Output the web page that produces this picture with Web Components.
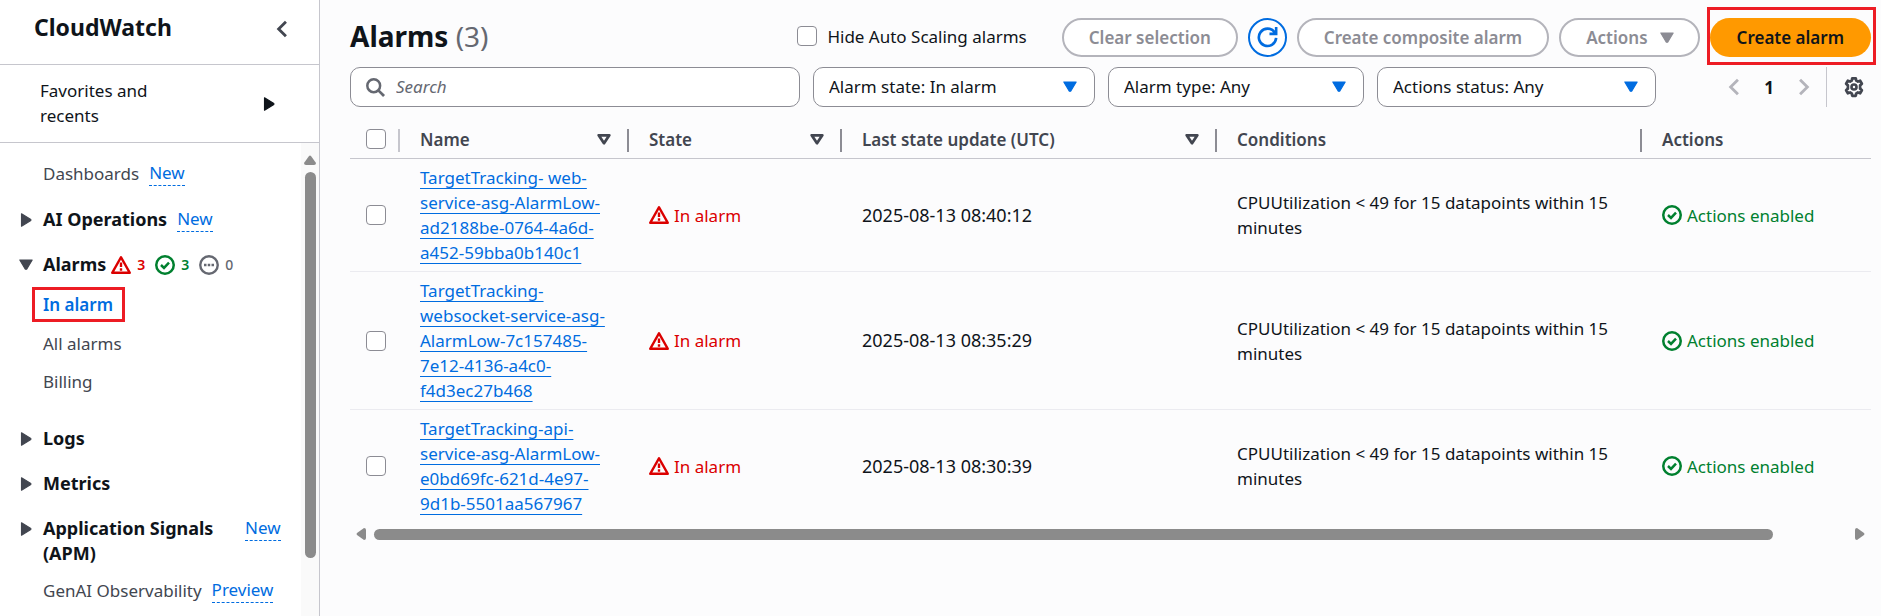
<!DOCTYPE html>
<html lang="en">
<head>
<meta charset="utf-8">
<title>CloudWatch Alarms</title>
<style>
  body { margin: 0; background: #fcfcfd; color: #0f141a; font: 17px/25px "Noto Sans", "Open Sans", sans-serif; }
</style>
</head>
<body>
<cw-app>
  <cw-sidebar slot="nav">
    <cw-nav-item label="Dashboards" badge="New"></cw-nav-item>
    <cw-nav-item group label="AI Operations" badge="New"></cw-nav-item>
    <cw-nav-item group open label="Alarms"><cw-alarm-counts></cw-alarm-counts></cw-nav-item>
    <cw-nav-item current label="In alarm"></cw-nav-item>
    <cw-nav-item child label="All alarms"></cw-nav-item>
    <cw-nav-item child last label="Billing"></cw-nav-item>
    <cw-nav-item group label="Logs"></cw-nav-item>
    <cw-nav-item group label="Metrics"></cw-nav-item>
    <cw-nav-item group wide label="Application Signals (APM)" badge="New"></cw-nav-item>
    <cw-nav-item label="GenAI Observability" badge="Preview"></cw-nav-item>
  </cw-sidebar>
  <cw-header></cw-header>
  <cw-filters></cw-filters>
  <cw-alarm-table></cw-alarm-table>
</cw-app>

<script>
const base = `<style>
  * { box-sizing: border-box; }
  a { color: #006ce0; text-decoration: none; }
  button, input, select { font: inherit; color: inherit; margin: 0; }
  input[type=checkbox] { appearance: none; display: block; flex: none; width: 20px; height: 20px; border: 1px solid #8c8c94; border-radius: 4px; background: #fff; }
  input[type=checkbox]:checked { background: #006ce0; }
</style>`;

const define = (name, render) => customElements.define(name, class extends HTMLElement {
  connectedCallback() {
    if (this.shadowRoot) return;
    this.attachShadow({ mode: 'open' }).innerHTML = base + render(this);
  }
});

const icons = {
  alarm: '<path d="M8 1.800 15 14.200H1Z" stroke-width="2" stroke-linejoin="round"/><path d="M8 6v3.600M8 10.600v2" stroke-width="1.900"/>',
  ok: '<circle cx="8" cy="8" r="7" stroke-width="2"/><path d="m4.800 8 2.400 2.300 4-4.200" stroke-width="2"/>',
  pending: '<circle cx="8" cy="8" r="7" stroke-width="1.900"/><path d="M4 8h2M7 8h2M10 8h2" stroke-width="2"/>',
  refresh: '<path d="M9.500 5.200H14.600V0M14.600 8.300a6.600 6.600 0 1 1-1.300-4.400l1 1.200" stroke-width="2"/>',
  search: '<circle cx="6.500" cy="6.500" r="5.400" stroke-width="2.100"/><path d="m10.400 10.400 4.800 4.800" stroke-width="2.300"/>',
  left: '<path d="m11.500 1.500-6.500 6.500 6.500 6.500" stroke-width="2.500"/>',
  right: '<path d="m4.500 1.500 6.500 6.500-6.500 6.500" stroke-width="2.500"/>',
  caret: '<path d="M2.500 3.500h11L8.600 11.700H7.400Z" fill="currentColor" stroke-width="1" stroke-linejoin="round"/>',
  play: '<path d="M4 2.500v11L12.300 8.500V7.500Z" fill="currentColor" stroke-width="1" stroke-linejoin="round"/>',
  sort: '<path d="M3.300 4.700h9.400L8 11.700Z" stroke-width="2.500" stroke-linejoin="round"/>',
  gear: '<path d="M6.600 1h2.800l.4 1.900 1.300.700 1.800-.600 1.400 2.400-1.400 1.300v2.600l1.400 1.300-1.400 2.400-1.800-.600-1.300.700L9.400 15H6.600l-.4-1.900-1.300-.700-1.800.600-1.400-2.400 1.400-1.300V6.700L1.700 5.400l1.400-2.400 1.800.600 1.300-.700Z" stroke-width="2.200" stroke-linejoin="round"/><circle cx="8" cy="8" r="2" stroke-width="2.100"/>'
};

define('cw-icon', el => `<style>:host { display: block; flex: none; width: 20px; height: 20px; } svg { display: block; width: 100%; height: 100%; overflow: visible; }</style>
  <svg viewBox="0 0 16 16" fill="none" stroke="currentColor" aria-hidden="true">${icons[el.getAttribute('name')]}</svg>`);

define('cw-app', () => `<style>
  :host { display: grid; grid-template-columns: 320px minmax(0, 1fr); min-height: 100vh; }
  main { padding: 18px 10px 0 30px; }
</style><slot name="nav"></slot><main><slot></slot></main>`);

define('cw-sidebar', () => `<style>
  :host { display: flex; flex-direction: column; height: 100vh; overflow: hidden; background: #fff; border-right: 1px solid #c6c6cd; }
  header { display: flex; justify-content: space-between; height: 65px; padding: 12px 28px 0 34px; border-bottom: 1px solid #c6c6cd; }
  h2 { margin: 0; font-size: 23px; line-height: 30px; font-weight: 700; }
  header button { align-self: start; padding: 8px 0; border: 0; background: none; color: #424650; }
  header cw-icon { width: 18px; height: 18px; }
  .fav { display: flex; align-items: center; justify-content: space-between; width: 100%; height: 78px; padding: 0 41px 0 40px; border: 0; border-bottom: 1px solid #c6c6cd; background: none; text-align: left; }
  .fav span { width: 130px; padding-bottom: 2px; }
  .fav cw-icon { width: 18px; height: 18px; }
  .body { flex: 1; min-height: 0; display: flex; }
  nav { flex: 1; min-width: 0; padding-top: 18px; }
  .scroll { flex: none; width: 18px; padding-top: 12px; display: flex; flex-direction: column; align-items: center; gap: 7px; background: #fafafa; color: #8b8b8b; }
  .scroll svg { width: 12px; height: 10px; }
  .thumb { width: 11px; height: 87%; max-height: 386px; border-radius: 6px; background: #8b8b8b; }
</style>
<header><h2>CloudWatch</h2><button aria-label="Close navigation"><cw-icon name="left"></cw-icon></button></header>
<button class="fav"><span>Favorites and recents</span><cw-icon name="play"></cw-icon></button>
<div class="body"><nav><slot></slot></nav>
<div class="scroll"><svg viewBox="0 0 12 10" fill="currentColor"><path d="M5 1Q6 0 7 1L12 8Q12 10 10 10H2Q0 10 0 8Z"/></svg><div class="thumb"></div></div></div>`);

define('cw-nav-item', el => {
  const label = el.getAttribute('label'), badge = el.getAttribute('badge');
  const group = el.hasAttribute('group');
  return `<style>
  :host { display: flex; align-items: flex-start; padding-left: 43px; margin-bottom: 21px; color: #424650; }
  :host([group]) { padding-left: 17px; margin-bottom: 20px; gap: 8px; color: #0f141a; }
  :host([group][open]) { margin-bottom: 10px; }
  :host([current]) { padding-left: 32px; margin-bottom: 9px; }
  :host([child]) { margin-bottom: 13px; }
  :host([last]) { margin-bottom: 32px; }
  :host([group][wide]) { margin-bottom: 12px; }
  .arrow { margin-top: 4px; width: 18px; height: 18px; color: #424650; }
  a.item { color: inherit; }
  :host([group]) .item { font-weight: 700; font-size: 18px; }
  :host([wide]) .item { width: 192px; }
  :host([current]) .item { color: #006ce0; font-weight: 600; border: 3px solid #ed1c24; padding: 2px 9px 2px 8px; }
  .badge { margin-left: 10px; line-height: 24px; border-bottom: 1px dashed #006ce0; }
  :host([group]) .badge { margin-left: 2px; }
</style>${group ? `<cw-icon class="arrow" name="${el.hasAttribute('open') ? 'caret' : 'play'}"></cw-icon>` : ''}<a class="item" href="#">${label}</a>${badge ? `<a class="badge" href="#">${badge}</a>` : ''}<slot></slot>`;
});

define('cw-alarm-counts', () => `<style>
  :host { display: flex; gap: 10px; margin-left: -3px; font-size: 14px; }
  span { display: flex; align-items: center; gap: 6px; font-weight: 600; }
  .a { color: #db0000; } .o { color: #00802f; } .p { color: #656871; font-weight: 500; }
</style><span class="a"><cw-icon name="alarm"></cw-icon>3</span><span class="o"><cw-icon name="ok"></cw-icon>3</span><span class="p"><cw-icon name="pending"></cw-icon>0</span>`);

define('cw-header', () => `<style>
  :host { display: flex; align-items: center; height: 39px; gap: 10px; }
  h1 { flex: 1; align-self: flex-start; margin: 0; font-size: 28px; line-height: 36px; font-weight: 700; }
  h1 span { color: #656871; font-weight: 400; }
  label { display: flex; align-items: center; gap: 10px; margin: 0 25px 3px 0; }
  button { display: flex; align-items: center; justify-content: center; gap: 12px; flex: none; height: 39px; padding: 0 25px; border: 2px solid #b4b4bb; border-radius: 20px; background: #fff; color: #8c8c94; font-weight: 600; }
  .menu { padding: 0 22px 0 25px; gap: 10px; }
  .refresh { width: 39px; padding: 0; border-color: #006ce0; color: #006ce0; }
  .primary { padding: 0 27px; border: 0; background: #ff9900; color: #0f141a; }
  .mark { display: block; position: relative; }
  .mark::after { content: ""; position: absolute; inset: -11px -5px -8px -3px; border: 3px solid #ed1c24; pointer-events: none; }
  button cw-icon { width: 18px; height: 18px; }
  .refresh cw-icon { width: 21px; height: 21px; }
</style>
<h1>Alarms <span>(3)</span></h1>
<label><input type="checkbox">Hide Auto Scaling alarms</label>
<button disabled>Clear selection</button>
<button class="refresh" aria-label="Refresh"><cw-icon name="refresh"></cw-icon></button>
<button disabled>Create composite alarm</button>
<button disabled class="menu">Actions<cw-icon name="caret"></cw-icon></button>
<div class="mark"><button class="primary">Create alarm</button></div>`);

define('cw-select', el => `<style>
  :host { display: block; position: relative; }
  select { appearance: none; display: block; width: 100%; height: 40px; padding: 0 40px 2px 15px; border: 1px solid #8c8c94; border-radius: 10px; background: #fff; }
  cw-icon { position: absolute; right: 16px; top: 11px; width: 18px; height: 18px; color: #006ce0; pointer-events: none; }
</style><select aria-label="${el.getAttribute('label')}"><option>${el.getAttribute('label')}: ${el.getAttribute('value')}</option></select><cw-icon name="caret"></cw-icon>`);

define('cw-filters', () => `<style>
  :host { display: flex; align-items: center; gap: 13px; margin-top: 10px; }
  .search { flex: 1; display: flex; align-items: center; gap: 11px; height: 40px; padding: 0 15px; border: 1px solid #8c8c94; border-radius: 10px; background: #fff; color: #656871; }
  .search cw-icon { width: 19px; height: 19px; }
  .search input { flex: 1; min-width: 0; border: 0; padding: 0 0 2px; background: none; outline: 0; color: #0f141a; }
  .search input::placeholder { color: #656871; font-style: italic; opacity: 1; }
  .s1 { width: 282px; } .s2 { width: 256px; } .s3 { width: 279px; }
  .pager { display: flex; align-items: center; margin-left: 56px; }
  button { border: 0; padding: 0; background: none; color: #b4b4bb; }
  .pager cw-icon { width: 18px; height: 18px; }
  .page { width: 52px; font-weight: 700; color: #0f141a; text-align: center; }
  .gear { margin-left: 13px; padding: 10px 7px 10px 17px; border-left: 1px solid #c6c6cd; color: #424650; }
  .pager .gear cw-icon { width: 20px; height: 20px; }
</style>
<label class="search"><cw-icon name="search"></cw-icon><input type="search" placeholder="Search" aria-label="Search"></label>
<cw-select class="s1" label="Alarm state" value="In alarm"></cw-select>
<cw-select class="s2" label="Alarm type" value="Any"></cw-select>
<cw-select class="s3" label="Actions status" value="Any"></cw-select>
<div class="pager"><button aria-label="Previous page"><cw-icon name="left"></cw-icon></button><button class="page">1</button><button aria-label="Next page"><cw-icon name="right"></cw-icon></button><button class="gear" aria-label="Preferences"><cw-icon name="gear"></cw-icon></button></div>`);

define('cw-status', el => `<style>
  :host { display: flex; align-items: center; gap: 5px; color: ${el.getAttribute('type') === 'ok' ? '#00802f' : '#db0000'}; }
</style><cw-icon name="${el.getAttribute('type')}"></cw-icon><slot></slot>`);

const alarms = [
  ['TargetTracking- web-<br>service-asg-AlarmLow-<br>ad2188be-0764-4a6d-<br>a452-59bba0b140c1', '2025-08-13 08:40:12'],
  ['TargetTracking-<br>websocket-service-asg-<br>AlarmLow-7c157485-<br>7e12-4136-a4c0-<br>f4d3ec27b468', '2025-08-13 08:35:29'],
  ['TargetTracking-api-<br>service-asg-AlarmLow-<br>e0bd69fc-621d-4e97-<br>9d1b-5501aa567967', '2025-08-13 08:30:39']
];

define('cw-alarm-table', () => `<style>
  :host { display: block; }
  table { width: 100%; table-layout: fixed; border-collapse: separate; border-spacing: 0; }
  th { position: relative; height: 52px; padding: 13px 20px 0 20px; text-align: left; font-weight: 600; color: #424650; border-bottom: 1px solid #c6c6cd; }
  th:not(:last-child)::after { content: ""; position: absolute; right: 0; top: 22px; width: 2px; height: 23px; background: #8c8c94; }
  th:first-child::after { background: #c6c6cd !important; }
  th:first-child, td:first-child { padding-left: 16px; padding-right: 0; }
  th div { display: flex; align-items: center; justify-content: space-between; }
  th cw-icon { width: 18px; height: 18px; margin-right: -4px; }
  td { padding: 6px 20px; border-bottom: 1px solid #ebebf0; vertical-align: middle; }
  tr:last-child td { border-bottom: 0; }
  td a { text-decoration: underline; text-decoration-thickness: 1px; text-underline-offset: 4px; text-decoration-skip-ink: none; white-space: nowrap; }
  .time { font-size: 18px; }
  .c0 { width: 50px; } .c1 { width: 229px; } .c2 { width: 213px; } .c3 { width: 375px; } .c5 { width: 229px; }
  .bar { display: flex; align-items: center; gap: 8px; padding: 6px; color: #8b8b8b; }
  .bar svg { flex: none; width: 10px; height: 12px; }
  .track { flex: 1; }
  .thumb { width: 95%; height: 11px; border-radius: 6px; background: #8b8b8b; }
</style>
<table>
<colgroup><col class="c0"><col class="c1"><col class="c2"><col class="c3"><col><col class="c5"></colgroup>
<thead><tr><th><input type="checkbox" aria-label="Select all alarms"></th>
${['Name', 'State', 'Last state update (UTC)'].map(t => `<th><div>${t}<cw-icon name="sort"></cw-icon></div></th>`).join('')}
<th>Conditions</th><th>Actions</th></tr></thead>
<tbody>${alarms.map(([name, time]) => `<tr><td><input type="checkbox" aria-label="Select alarm"></td>
<td><a href="#">${name}</a></td><td><cw-status type="alarm">In alarm</cw-status></td><td class="time">${time}</td>
<td>CPUUtilization &lt; 49 for 15 datapoints within 15 minutes</td><td><cw-status type="ok">Actions enabled</cw-status></td></tr>`).join('')}</tbody>
</table>
<div class="bar"><svg viewBox="0 0 10 12" fill="currentColor"><path d="M1 5Q0 6 1 7L8 12Q10 12 10 10V2Q10 0 8 0Z"/></svg><div class="track"><div class="thumb"></div></div><svg viewBox="0 0 10 12" fill="currentColor"><path d="M9 5Q10 6 9 7L2 12Q0 12 0 10V2Q0 0 2 0Z"/></svg></div>`);
</script>
</body>
</html>
